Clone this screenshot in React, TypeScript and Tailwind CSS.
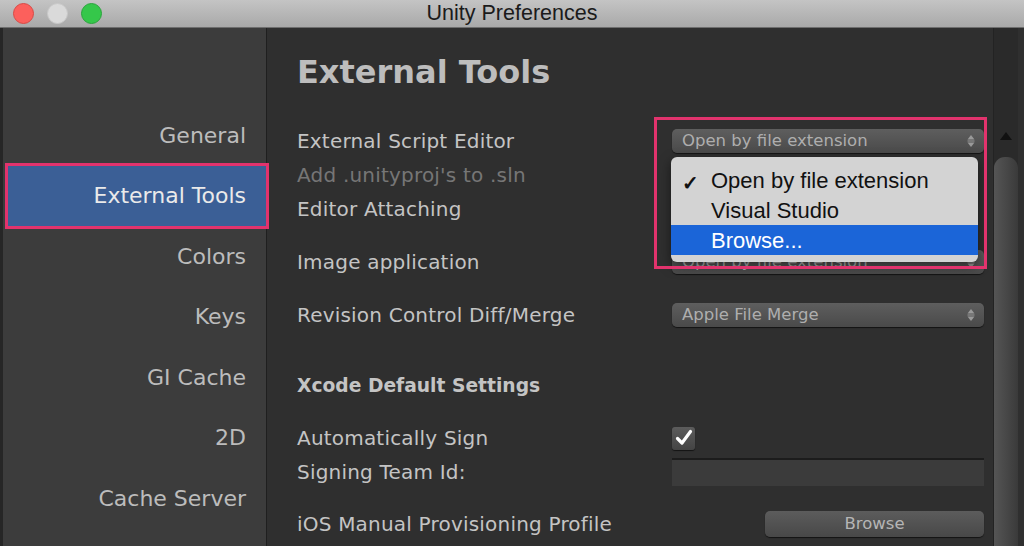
import React from "react";

const UI = { fontFamily: '"DejaVu Sans", "Liberation Sans", sans-serif' };
const MAC = { fontFamily: '"Liberation Sans", Arial, sans-serif' };

function Arrows() {
  return (
    <svg width="8" height="14" viewBox="0 0 8 14">
      <path d="M4 1 L7.5 5.5 H0.5 Z" fill="#9a9a9a" />
      <rect x="0.5" y="6.5" width="7" height="1" fill="#9a9a9a" />
      <path d="M4 13 L7.5 8.5 H0.5 Z" fill="#9a9a9a" />
    </svg>
  );
}

function Dropdown({ text }: { text: string }) {
  return (
    <div className="flex h-[24px] w-[312px] items-center justify-between rounded-[5px] bg-gradient-to-b from-[#5e5e5e] to-[#4a4a4a] pl-[10px] pr-[9px] shadow-[0_1px_1px_rgba(0,0,0,0.6)]">
      <span className="text-[16.5px] text-[#aeaeae]" style={UI}>
        {text}
      </span>
      <Arrows />
    </div>
  );
}

function Row({
  label,
  children,
  dim,
  bold,
}: {
  label: string;
  children?: React.ReactNode;
  dim?: boolean;
  bold?: boolean;
}) {
  return (
    <div className="flex h-[34px] items-center">
      <div
        className={`w-[375px] ${dim ? "text-[#767676]" : "text-[#c4c4c4]"} ${
          bold ? "text-[18.7px] font-bold" : "text-[20px] tracking-[0.2px]"
        }`}
        style={UI}
      >
        {label}
      </div>
      <div className="flex w-[312px] items-center">{children}</div>
    </div>
  );
}

const sideItems = ["General", "External Tools", "Colors", "Keys", "GI Cache", "2D", "Cache Server"];

export default function App() {
  return (
    <div className="relative h-[546px] w-[1024px] overflow-hidden bg-[#2f2f2f]">
      {/* Title bar */}
      <div className="relative flex h-[28px] items-center justify-center border-b border-[#6e6e6e] bg-gradient-to-b from-[#c4c4c4] to-[#a9a9a9]">
        <div className="absolute left-[13px] top-[3px] flex gap-[13px]">
          <div className="h-[21px] w-[21px] rounded-full border border-[#d94a45] bg-[#fc605c]" />
          <div className="h-[21px] w-[21px] rounded-full border border-[#c8c8c8] bg-[#dadada]" />
          <div className="h-[21px] w-[21px] rounded-full border border-[#2aa53c] bg-[#35c74a]" />
        </div>
        <span className="text-[21.5px] text-[#1b1b1b]" style={MAC}>
          Unity Preferences
        </span>
      </div>

      <div className="flex h-[518px]">
        {/* left strip */}
        <div className="w-[3px] bg-[#262626]" />
        {/* Sidebar */}
        <div className="flex w-[264px] flex-col border-r border-[#1f1f1f] bg-[#3c3c3c] pt-[77px]">
          {sideItems.map((it) => {
            const sel = it === "External Tools";
            return (
              <div
                key={it}
                className={`flex h-[60.5px] items-center justify-end pr-[20px] text-[22px] ${
                  sel
                    ? "ml-[5px] bg-[#3b5f96] text-[#eaeaea] outline-[3px] outline-[#e2336d]"
                    : "text-[#bcbcbc]"
                }`}
                style={UI}
              >
                {it}
              </div>
            );
          })}
        </div>

        {/* Main */}
        <div className="flex w-[724px] flex-col pl-[30px]">
          <div className="h-[96px] pt-[24px]">
            <div className="h-[40px] text-[32px] font-bold leading-[40px] text-[#bdbdbd]" style={UI}>
              External Tools
            </div>
          </div>
          <Row label="External Script Editor">
            <Dropdown text="Open by file extension" />
          </Row>
          <Row label="Add .unityproj's to .sln" dim />
          <Row label="Editor Attaching" />
          <div className="mt-[19px]">
            <Row label="Image application">
              <Dropdown text="Open by file extension" />
            </Row>
          </div>
          <div className="mt-[19px]">
            <Row label="Revision Control Diff/Merge">
              <Dropdown text="Apple File Merge" />
            </Row>
          </div>
          <div className="mt-[37px]">
            <Row label="Xcode Default Settings" bold />
          </div>
          <div className="mt-[18px]">
            <Row label="Automatically Sign">
              <div className="flex h-[23px] w-[23px] items-center justify-center rounded-[3px] bg-gradient-to-b from-[#5c5c5c] to-[#444] shadow-[0_1px_1px_rgba(0,0,0,0.6)]">
                <svg width="18" height="18" viewBox="0 0 18 18">
                  <path d="M2.5 9.5 L7 14 L15.5 2.5" fill="none" stroke="#fff" strokeWidth="3.2" strokeLinecap="round" strokeLinejoin="round" />
                </svg>
              </div>
            </Row>
          </div>
          <Row label="Signing Team Id:">
            <div className="h-[28px] w-[312px] border-t-2 border-[#1c1c1c] bg-[#3b3b3b]" />
          </Row>
          <div className="mt-[18px]">
            <Row label="iOS Manual Provisioning Profile">
              <div className="ml-[93px] flex h-[26px] w-[219px] items-center justify-center rounded-[5px] bg-gradient-to-b from-[#5c5c5c] to-[#484848] shadow-[0_1px_1px_rgba(0,0,0,0.6)]">
                <span className="text-[16.5px] text-[#b5b5b5]" style={UI}>
                  Browse
                </span>
              </div>
            </Row>
          </div>
        </div>

        {/* Scrollbar */}
        <div className="flex w-[33px] flex-col">
          <div className="ml-[2px] flex w-[25px] flex-1 flex-col border-l border-[#232323] bg-[#2a2a2a]">
            <div className="flex h-[129px] items-end justify-center pb-[17px]">
              <svg width="12" height="8" viewBox="0 0 12 8">
                <path d="M6 0 L12 8 H0 Z" fill="#111" />
              </svg>
            </div>
            <div className="flex-1 rounded-t-[11px] bg-gradient-to-r from-[#555] via-[#484848] to-[#3a3a3a]" />
          </div>
        </div>
      </div>

      {/* Popup menu */}
      <div
        className="absolute left-[671px] top-[157px] w-[307px] rounded-[6px] bg-[#d3d3d3] py-[8px] pb-[7px] shadow-[0_4px_12px_rgba(0,0,0,0.5)]"
        style={MAC}
      >
        <div className="relative flex h-[30px] items-center pl-[40px] text-[22px] text-[#111]">
          <span className="absolute left-[11px] top-[3px] text-[20px] font-bold">✓</span>
          Open by file extension
        </div>
        <div className="flex h-[30px] items-center pl-[40px] text-[22px] text-[#111]">Visual Studio</div>
        <div className="flex h-[30px] items-center bg-[#1b65d8] pl-[40px] text-[22px] text-white">Browse...</div>
      </div>

      {/* Annotation box */}
      <div className="pointer-events-none absolute left-[654px] top-[117px] h-[152px] w-[333px] border-[3px] border-[#e2336d]" />
    </div>
  );
}
